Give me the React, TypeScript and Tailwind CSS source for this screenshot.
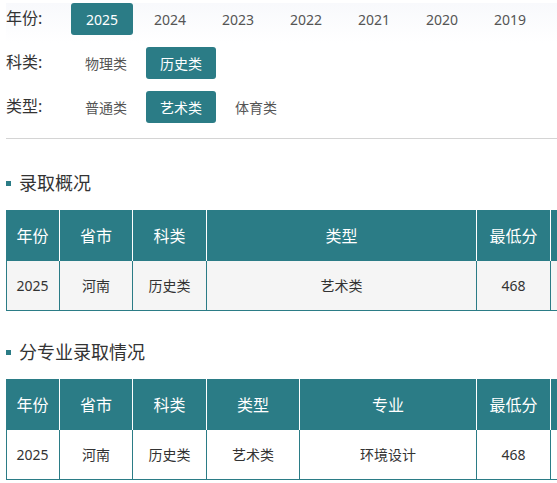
const years = ["2025", "2024", "2023", "2022", "2021", "2020", "2019"];

type Col = { label: string; width: string };

// The last column runs past the right edge of the view; only its left edge shows.
const summaryCols: Col[] = [
  { label: "年份", width: "w-[54px]" },
  { label: "省市", width: "w-[73px]" },
  { label: "科类", width: "w-[74px]" },
  { label: "类型", width: "w-[270px]" },
  { label: "最低分", width: "w-[74px]" },
  { label: "", width: "w-[160px]" },
];
const summaryRow = ["2025", "河南", "历史类", "艺术类", "468", ""];

const majorCols: Col[] = [
  { label: "年份", width: "w-[54px]" },
  { label: "省市", width: "w-[73px]" },
  { label: "科类", width: "w-[74px]" },
  { label: "类型", width: "w-[93px]" },
  { label: "专业", width: "w-[177px]" },
  { label: "最低分", width: "w-[74px]" },
  { label: "", width: "w-[160px]" },
];
const majorRow = ["2025", "河南", "历史类", "艺术类", "环境设计", "468", ""];

function FilterRow({
  label,
  items,
  active,
  wide,
}: {
  label: string;
  items: string[];
  active: string;
  wide?: boolean;
}) {
  return (
    <div className="flex items-center h-[32px]">
      <div className="w-[65px] shrink-0 text-[16px] text-[#333] -mt-[2px]">{label}</div>
      <div className={`flex ${wide ? "gap-[5px]" : "gap-[6px]"}`}>
        {items.map((item) => (
          <span
            key={item}
            className={`h-[32px] flex items-center justify-center rounded-[3px] text-[14px] ${
              wide ? "w-[70px]" : "w-[62px]"
            } ${item === active ? "bg-[#2b7c86] text-white" : "text-[#555]"}`}
          >
            {item}
          </span>
        ))}
      </div>
    </div>
  );
}

function SectionTitle({ children }: { children: string }) {
  return (
    <div className="flex items-center h-[24px] gap-[8px]">
      <span className="w-[5px] h-[5px] bg-[#2b7c86]" />
      <h2 className="text-[18px] text-[#333]">{children}</h2>
    </div>
  );
}

function DataTable({ cols, row, bodyBg }: { cols: Col[]; row: string[]; bodyBg: string }) {
  return (
    <div className="w-max">
      {/* Header */}
      <div className="flex h-[51px] bg-[#2b7c86]">
        {cols.map((c, i) => (
          <div
            key={i}
            className={`${c.width} shrink-0 flex items-center justify-center text-white text-[16px] ${
              i < cols.length - 1 ? "border-r border-white" : ""
            }`}
          >
            {c.label}
          </div>
        ))}
      </div>
      {/* Body */}
      <div className={`flex h-[50px] border-l border-b border-[#2b7c86] ${bodyBg}`}>
        {row.map((v, i) => (
          <div
            key={i}
            className={`${cols[i].width} shrink-0 flex items-center justify-center text-[14px] text-[#333] border-r border-[#2b7c86] ${
              i === 0 ? "-ml-px" : ""
            }`}
          >
            {v}
          </div>
        ))}
      </div>
    </div>
  );
}

export default function App() {
  return (
    <div
      className="w-full h-[483px] overflow-hidden bg-white"
      style={{ fontFamily: '"Noto Sans", "Noto Sans CJK SC", sans-serif' }}
    >
      <div className="pl-[6px] pt-[3px]">
        {/* Filters */}
        <div className="flex flex-col gap-[12px] bg-gradient-to-b from-[#f8f9fc] to-white to-[40px]">
          <FilterRow label="年份:" items={years} active="2025" />
          <FilterRow label="科类:" items={["物理类", "历史类"]} active="历史类" wide />
          <FilterRow label="类型:" items={["普通类", "艺术类", "体育类"]} active="艺术类" wide />
        </div>
        <hr className="mt-[15px] border-t border-[#d4d4d4] w-[700px]" />

        {/* 录取概况 */}
        <div className="mt-[32px]">
          <SectionTitle>录取概况</SectionTitle>
        </div>
        <div className="mt-[15px]">
          <DataTable cols={summaryCols} row={summaryRow} bodyBg="bg-[#f5f5f5]" />
        </div>

        {/* 分专业录取情况 */}
        <div className="mt-[29px]">
          <SectionTitle>分专业录取情况</SectionTitle>
        </div>
        <div className="mt-[15px]">
          <DataTable cols={majorCols} row={majorRow} bodyBg="bg-white" />
        </div>
      </div>
    </div>
  );
}
